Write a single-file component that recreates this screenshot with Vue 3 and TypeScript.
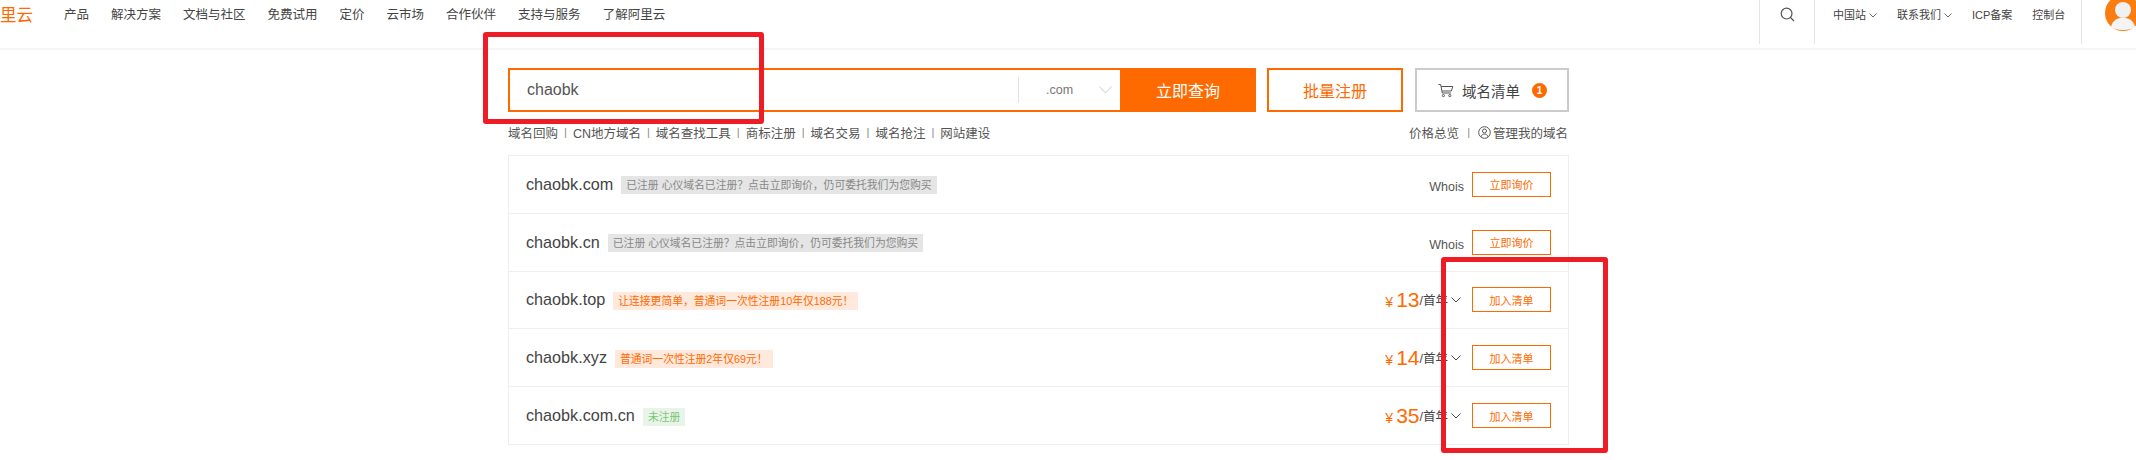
<template>
  <div class="page">
    <header class="topbar">
      <div class="logo">里云</div>
      <nav class="nav">
        <a v-for="n in navItems" :key="n">{{ n }}</a>
      </nav>
      <div class="top-right">
        <div class="search-cell">
          <svg width="15" height="15" viewBox="0 0 15 15" fill="none" stroke="#555" stroke-width="1.2">
            <circle cx="6.6" cy="6.6" r="5.4" />
            <path d="M10.5 10.5 L14 14" />
          </svg>
        </div>
        <div class="links">
          <a>中国站<svg class="chev" width="8" height="5" viewBox="0 0 8 5" fill="none" stroke="#666"><path d="M.5.5 4 4 7.5.5" /></svg></a>
          <a>联系我们<svg class="chev" width="8" height="5" viewBox="0 0 8 5" fill="none" stroke="#666"><path d="M.5.5 4 4 7.5.5" /></svg></a>
          <a>ICP备案</a>
          <a>控制台</a>
        </div>
        <div class="avatar-cell">
          <svg class="avatar" width="36" height="36" viewBox="0 0 36 36">
            <circle cx="18" cy="18" r="18" fill="#fb7d12" />
            <circle cx="18" cy="15" r="8" fill="#f1f1f1" />
            <path d="M6 32 C8 24 13 23 18 23 C23 23 28 24 30 32 C26 36 10 36 6 32Z" fill="#f4f4f4" />
          </svg>
        </div>
      </div>
    </header>

    <main class="main">
      <div class="search-row">
        <div class="search-box">
          <span class="keyword">chaobk</span>
          <div class="suffix">
            <span>.com</span>
            <svg width="13" height="8" viewBox="0 0 13 8" fill="none" stroke="#ccc"><path d="M.5.5 6.5 7 12.5.5" /></svg>
          </div>
          <button class="query">立即查询</button>
        </div>
        <button class="batch">批量注册</button>
        <button class="cart">
          <svg width="16" height="15" viewBox="0 0 16 15" fill="none" stroke="#555" stroke-width="1">
            <path d="M.5 1.5h2.2l1.6 8.5h8.6" />
            <path d="M3.2 3.5h11.6l-1.4 4.5H4.2" />
            <circle cx="5.4" cy="12.6" r="1.1" />
            <circle cx="11.8" cy="12.6" r="1.1" />
          </svg>
          <span>域名清单</span>
          <i class="badge">1</i>
        </button>
      </div>

      <div class="sub-row">
        <div class="sub-links">
          <template v-for="(s, i) in subLinks" :key="s">
            <span v-if="i > 0" class="sep">|</span>
            <a>{{ s }}</a>
          </template>
        </div>
        <div class="sub-right">
          <a>价格总览</a>
          <span class="sep">|</span>
          <svg width="13" height="13" viewBox="0 0 13 13" fill="none" stroke="#555">
            <circle cx="6.5" cy="6.5" r="5.8" />
            <circle cx="6.5" cy="5" r="2" />
            <path d="M3 10.8c.6-2 2-2.7 3.5-2.7s2.900.7 3.500 2.700" />
          </svg>
          <a>管理我的域名</a>
        </div>
      </div>

      <div class="list">
        <div v-for="r in rows" :key="r.name" class="row">
          <span class="name">{{ r.name }}</span>
          <span class="tag" :class="r.kind">{{ r.tag }}</span>
          <div class="row-right">
            <template v-if="r.price">
              <span class="price"><em>¥</em><b>{{ r.price }}</b></span>
              <span class="unit">/首年</span>
              <svg class="row-chev" width="10" height="6" viewBox="0 0 10 6" fill="none" stroke="#445"><path d="M.5.5 5 5 9.500.5" /></svg>
            </template>
            <span v-else class="whois">Whois</span>
            <button class="action">{{ r.price ? '加入清单' : '立即询价' }}</button>
          </div>
        </div>
      </div>
    </main>

    <!-- annotations drawn on top of the screenshot -->
    <div class="mark mark-search"></div>
    <div class="mark mark-actions"></div>
  </div>
</template>

<script setup lang="ts">
interface DomainRow {
  name: string
  tag: string
  kind: 'gray' | 'orange' | 'green'
  price?: number
}

const navItems = ['产品', '解决方案', '文档与社区', '免费试用', '定价', '云市场', '合作伙伴', '支持与服务', '了解阿里云']
const subLinks = ['域名回购', 'CN地方域名', '域名查找工具', '商标注册', '域名交易', '域名抢注', '网站建设']

const takenTag = '已注册 心仪域名已注册\uff1f点击立即询价\uff0c仍可委托我们为您购买'

const rows: DomainRow[] = [
  { name: 'chaobk.com', tag: takenTag, kind: 'gray' },
  { name: 'chaobk.cn', tag: takenTag, kind: 'gray' },
  { name: 'chaobk.top', tag: '让连接更简单\uff0c普通词一次性注册10年仅188元\uff01', kind: 'orange', price: 13 },
  { name: 'chaobk.xyz', tag: '普通词一次性注册2年仅69元\uff01', kind: 'orange', price: 14 },
  { name: 'chaobk.com.cn', tag: '未注册', kind: 'green', price: 35 },
]
</script>

<style>
html, body { margin: 0; background: #fff; overflow: hidden; }
</style>

<style scoped>
.page {
  position: relative;
  width: 2136px;
  height: 460px;
  overflow: hidden;
  font-family: "Liberation Sans", "Noto Sans CJK SC", sans-serif;
  font-size: 12.5px;
  color: #444;
  background: #fff;
}

/* top bar */
.topbar {
  display: flex;
  align-items: flex-start;
  height: 48px;
  border-bottom: 2px solid #f5f5f5;
}
.logo {
  width: 64px;
  padding-top: 3px;
  font-size: 16.5px;
  line-height: 24px;
  color: #ff6a00;
}
.nav {
  display: flex;
  gap: 22px;
  line-height: 30px;
}
.top-right {
  display: flex;
  margin-left: auto;
  height: 44px;
}
.search-cell {
  display: flex;
  justify-content: center;
  width: 56px;
  padding-top: 7px;
  box-sizing: border-box;
  border-left: 1px solid #e4e4e4;
  border-right: 1px solid #e4e4e4;
}
.links {
  display: flex;
  gap: 20px;
  width: 266px;
  box-sizing: border-box;
  padding-left: 18px;
  font-size: 11px;
  line-height: 30px;
}
.chev { margin-left: 3px; vertical-align: 1px; }
.avatar-cell {
  width: 55px;
  box-sizing: border-box;
  padding-left: 23px;
  border-left: 1px solid #e4e4e4;
}
.avatar { display: block; margin-top: -5px; }

/* search */
.main {
  width: 1061px;
  margin-left: 508px;
  padding-top: 18px;
}
.search-row {
  display: flex;
  height: 44px;
}
.search-box {
  display: flex;
  align-items: center;
  width: 748px;
  box-sizing: border-box;
  border: 2px solid #ff6a00;
}
.keyword {
  flex: 1;
  padding-left: 17px;
  font-size: 16px;
  color: #555;
}
.suffix {
  display: flex;
  align-items: center;
  gap: 26px;
  width: 102px;
  height: 26px;
  box-sizing: border-box;
  padding-left: 27px;
  border-left: 1px solid #e2e2e2;
  font-size: 12.5px;
  color: #777;
}
.query {
  width: 136px;
  height: 44px;
  margin-right: -2px;
  border: 0;
  background: #ff6a00;
  color: #fff;
  font: inherit;
  font-size: 16px;
}
.batch {
  width: 136px;
  margin-left: 11px;
  box-sizing: border-box;
  border: 2px solid #ff6a00;
  background: #fff;
  color: #ff6a00;
  font: inherit;
  font-size: 16px;
}
.cart {
  display: flex;
  align-items: center;
  width: 154px;
  margin-left: 12px;
  padding: 0 0 0 21px;
  box-sizing: border-box;
  border: 2px solid #ccc;
  background: #fff;
  color: #444;
  font: inherit;
  font-size: 14.5px;
}
.cart span { margin-left: 8px; }
.badge {
  display: flex;
  align-items: center;
  justify-content: center;
  width: 15px;
  height: 15px;
  margin-left: 12px;
  border-radius: 50%;
  background: #ff6a00;
  color: #fff;
  font-size: 10px;
  font-style: normal;
  font-weight: 700;
}

/* sub links */
.sub-row {
  display: flex;
  align-items: center;
  justify-content: space-between;
  height: 43px;
  padding-bottom: 3px;
  box-sizing: border-box;
  color: #555;
}
.sub-links, .sub-right {
  display: flex;
  align-items: center;
}
.sep {
  margin: 0 6px;
  font-size: 11px;
  color: #888;
}
.sub-right { padding-right: 1px; }
.sub-right .sep { margin: 0 8px; }
.sub-right svg { margin-right: 2px; }

/* result list */
.list {
  border: 1px solid #eee;
}
.row {
  display: flex;
  align-items: center;
  height: 56.8px;
  padding: 0 17px;
  border-bottom: 1px solid #eee;
}
.row:last-child { border-bottom: 0; }
.name {
  font-size: 16.2px;
  color: #444;
}
.tag {
  height: 18px;
  margin: 2px 0 0 8px;
  padding: 0 5px;
  font-size: 10.8px;
  line-height: 18px;
  white-space: pre;
}
.gray { background: #e5e5e5; color: #888; }
.orange { background: #ffe9dc; color: #ff6a00; }
.green { background: #e9f4e9; color: #7cc576; }

.row-right {
  display: flex;
  align-items: center;
  margin-left: auto;
}
.price { color: #ff6a00; }
.price em {
  font-size: 14px;
  font-style: normal;
  margin-right: 3px;
}
.price b {
  font-size: 21px;
  font-weight: 400;
}
.unit {
  font-size: 12.5px;
  color: #444;
}
.row-chev { margin: 0 11px 0 3px; }
.whois {
  margin: 6px 8px 0 0;
  font-size: 12.5px;
  color: #555;
}
.action {
  width: 79px;
  height: 25px;
  padding: 0;
  box-sizing: border-box;
  border: 1px solid #ff6a00;
  background: #fff;
  color: #ff6a00;
  font: inherit;
  font-size: 11px;
}

/* red annotation boxes */
.mark {
  position: absolute;
  box-sizing: border-box;
  border: 5px solid #ee1c25;
  border-radius: 3px;
}
.mark-search { left: 483px; top: 32px; width: 281px; height: 92px; }
.mark-actions { left: 1441px; top: 257px; width: 167px; height: 196px; }
</style>
